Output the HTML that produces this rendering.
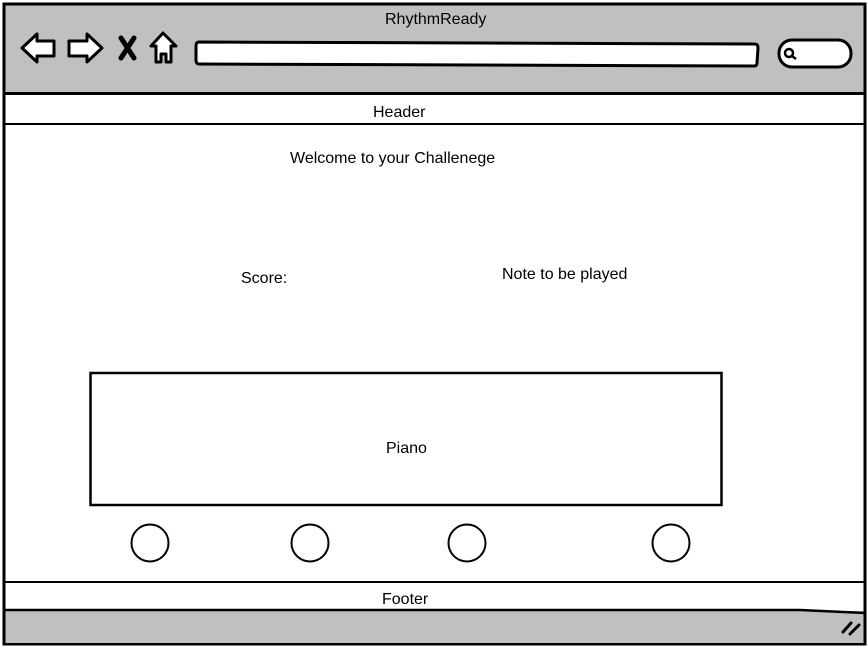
<!DOCTYPE html>
<html><head><style>
html,body{margin:0;padding:0;background:#fff;width:868px;height:648px;overflow:hidden;font-family:"Liberation Sans",sans-serif;}
.t{position:absolute;font-size:16px;color:#000;white-space:nowrap;}
</style></head><body>
<svg width="868" height="648" style="position:absolute;left:0;top:0">
<rect x="4" y="4" width="861" height="640" fill="#fff" stroke="#000" stroke-width="3"/>
<rect x="5.5" y="5.5" width="858" height="88" fill="#c0c0c0"/>
<line x1="4" y1="93.5" x2="865" y2="93.5" stroke="#000" stroke-width="3"/>
<line x1="4" y1="124" x2="865" y2="124" stroke="#000" stroke-width="2"/>
<line x1="4" y1="582" x2="865" y2="582" stroke="#000" stroke-width="2"/>
<rect x="5.5" y="611" width="858" height="32" fill="#c0c0c0"/>
<path d="M4 610 L800 610 L865 613" fill="none" stroke="#000" stroke-width="2.5"/>
<path d="M22 48 L37 34 L37 41 L54 41 L54 56 L37 56 L37 62 Z" fill="#fff" stroke="#000" stroke-width="3" stroke-linejoin="round"/>
<path d="M102 48 L87 34 L87 41 L69 41 L69 56 L87 56 L87 62 Z" fill="#fff" stroke="#000" stroke-width="3" stroke-linejoin="round"/>
<path d="M121 38 L134 58 M134 38 L121 58" stroke="#000" stroke-width="5" stroke-linecap="round"/>
<path d="M163 33 L151 46 L156 46 L156 62 L161 62 L161 54 L166 54 L166 62 L171 62 L171 46 L176 46 Z" fill="#fff" stroke="#000" stroke-width="3" stroke-linejoin="round"/>
<path d="M199 42 L755 44 Q758 44 758 48 L757 63 Q757 66 754 66 L199 64 Q196 64 196 60 L196 46 Q196 42 199 42 Z" fill="#fff" stroke="#000" stroke-width="3"/>
<rect x="779" y="40" width="72" height="27" rx="13" fill="#fff" stroke="#000" stroke-width="3"/>
<circle cx="789" cy="53" r="4" fill="none" stroke="#000" stroke-width="2.5"/>
<line x1="792" y1="56" x2="796" y2="59" stroke="#000" stroke-width="2.5"/>
<rect x="90.5" y="373" width="631" height="132" fill="#fff" stroke="#000" stroke-width="2.5"/>
<circle cx="150" cy="543" r="18.5" fill="#fff" stroke="#000" stroke-width="2"/>
<circle cx="310" cy="543" r="18.5" fill="#fff" stroke="#000" stroke-width="2"/>
<circle cx="467" cy="543" r="18.5" fill="#fff" stroke="#000" stroke-width="2"/>
<circle cx="671" cy="543" r="18.5" fill="#fff" stroke="#000" stroke-width="2"/>
<path d="M843 632 L851 623 M850 634 L859 625" stroke="#000" stroke-width="3" stroke-linecap="round"/>
</svg>
<div class="t" style="left:385px;top:11px">RhythmReady</div>
<div class="t" style="left:373px;top:104px">Header</div>
<div class="t" style="left:290px;top:150px">Welcome to your Challenege</div>
<div class="t" style="left:241px;top:270px">Score:</div>
<div class="t" style="left:502px;top:266px">Note to be played</div>
<div class="t" style="left:386px;top:440px">Piano</div>
<div class="t" style="left:382px;top:591px">Footer</div>
</body></html>
